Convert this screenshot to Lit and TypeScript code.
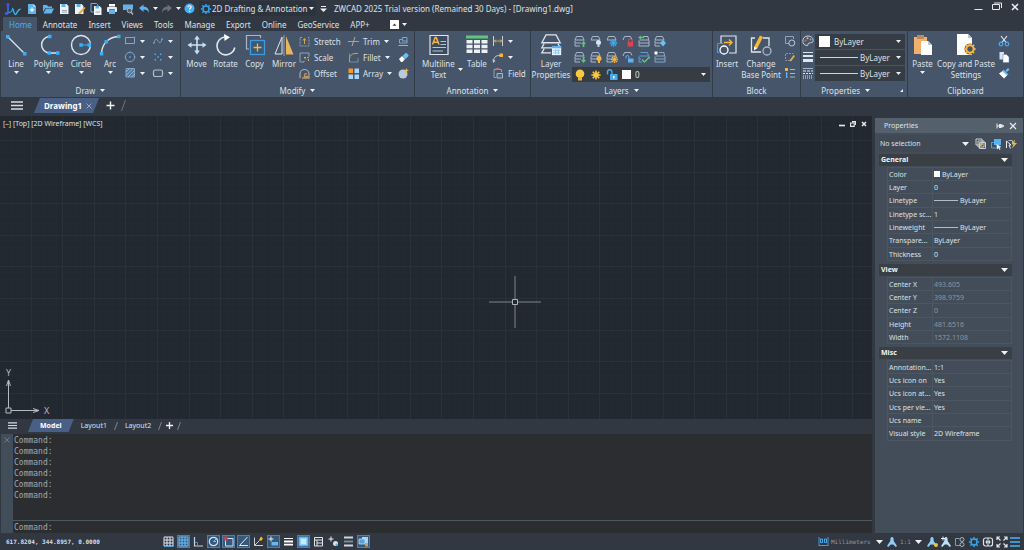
import { LitElement, html, svg, css, nothing, TemplateResult } from "lit";
import { customElement, state } from "lit/decorators.js";
import { classMap } from "lit/directives/class-map.js";

type Glyph = [number, number, unknown];

const W = "#dfe5ec";
const B = "#38b0f5";
const S = "#5fb4f0";
const Y = "#f5b83d";
const G = "#5fc878";
const M = "#a9b8c8";

const stack = (extra: unknown) => svg`
  <g fill="none" stroke=${M} stroke-width="1">
    <path d="M3.5 1.5h6l1.5 3.500h-9z"/><path d="M2 5.500v2.500h6M2 8.500v2.500h5M11 5.500v1"/>
  </g>${extra}`;

const gear = (cx: number, cy: number, r: number, color: string, hole = true) => svg`
  <g transform="translate(${cx} ${cy})" stroke=${color} fill="none">
    <circle r=${r} stroke-width=${hole ? 1.4 : 1} fill=${hole ? "none" : color}/>
    ${[0, 45, 90, 135, 180, 225, 270, 315].map(
      (a) => svg`<path d="M0 ${-r - 0.5}v-1.600" stroke-width="1.500" transform="rotate(${a})"/>`
    )}
  </g>`;

const compass = (color: string) => svg`
  <path d="M6 1c1.600 0 1.700 2 1.700 4L11 10 9.800 11 7.200 8.600H4.800L2.200 11 1 10l3.300-5C4.300 3 4.400 1 6 1z" fill=${color}/>`;

const ICONS: Record<string, Glyph> = {
  down: [5, 3, svg`<path d="M0 0h5L2.500 3z" fill="#eef2f6"/>`],
  downL: [7, 4, svg`<path d="M0 0h7L3.500 4z" fill="#eef2f6"/>`],
  corner: [3, 3, svg`<path d="M3 0v3H0z" fill="#eef2f6"/>`],
  logo: [18, 14, svg`
    <path d="M4 2.500v8.500" stroke="#3a6cf0" stroke-width="1.500"/><path d="M3.500 11c2.500 0 4-1.500 5-3.500" stroke="#3a9cf0" stroke-width="1.200" fill="none"/>
    <circle cx="4" cy="2.500" r="1.600" fill="#3b52ee"/><circle cx="2.500" cy="11.500" r="1.600" fill="#3b62ee"/>
    <path d="M8 6.500c2 0 1.500 6 3.200 6s1.800-5 5.300-5.500" stroke="#35b4f0" stroke-width="1.500" fill="none"/>`],
  new: [12, 12, svg`<path d="M2 1h5.500L10 3.500V11H2z" fill=${S}/><path d="M7.500 1v2.500H10" fill="#cfe9fb"/><path d="M6 4.500v4.500M3.800 6.800h4.400" stroke="#fff" stroke-width="1.200"/>`],
  open: [12, 12, svg`<path d="M1 2h4l1 1.500h4V5H3.500L1 9z" fill=${S}/><path d="M4 5.500h8L9.500 10.500H1.500z" fill=${S}/>`],
  save: [12, 12, svg`<path d="M2 1h6.500L10.500 3V11H2z" fill="#f0f3f6"/><path d="M3.500 1h4v3h-4z" fill=${S}/><path d="M4 7.500h5M4 9.200h5" stroke="#8496a8" stroke-width=".8"/>`],
  saveas: [12, 12, svg`<path d="M1 1h6.500L9.500 3V11H1z" fill="#f0f3f6"/><path d="M2.500 1h4v3h-4z" fill=${S}/><path d="M5 9.500 10.500 4l1 1L6.500 10.500l-2 .5z" fill=${Y} stroke="#8a6a20" stroke-width=".3"/>`],
  saveall: [12, 12, svg`<path d="M1 .5h5.500L8 2v7H1z" fill="none" stroke=${S}/><path d="M4 3h5.500L11.500 5v7H4z" fill="#f0f3f6"/><path d="M5.500 3h3.500v2.500H5.500z" fill=${S}/><path d="M5.500 9h4.500" stroke="#8496a8" stroke-width=".8"/>`],
  print: [12, 12, svg`<path d="M3 1h6v2.500H3z" fill="#fff"/><rect x="1" y="4" width="10" height="5" rx="1" fill="#e8edf2"/><path d="M3 7h6v4H3z" fill=${S}/><path d="M3 6.500h6" stroke="#6b7a8a"/>`],
  preview: [12, 12, svg`<path d="M1 1.500h10v5H1z" fill=${S}/><path d="M1 6.500h3" stroke=${S}/><circle cx="7.500" cy="7.500" r="2.300" fill="#56616e" stroke="#aab6c2"/><path d="m9 9 2 2.500" stroke="#aab6c2" stroke-width="1.400"/>`],
  undo: [12, 10, svg`<path d="M1 4 5.500 .5v2.300C9 2.800 11 4.500 11 9 10 6.300 8.500 5.600 5.500 5.600V8z" fill=${S}/>`],
  redo: [12, 10, svg`<path d="M11 4 6.500 .5v2.300C3 2.800 1 4.500 1 9c1-2.700 2.500-3.400 5.500-3.400V8z" fill="#66707c"/>`],
  help: [11, 11, svg`<circle cx="5.500" cy="5.500" r="5" fill="#49aef2"/><path d="M4 4.300c0-2.200 3.200-2 3.200-.2 0 1.200-1.600 1.200-1.600 2.500M5.600 7.700v1.100" fill="none" stroke="#fff" stroke-width="1.100"/>`],
  gear: [12, 12, gear(6, 6, 3, "#35a8f0")],
  qat: [7, 7, svg`<path d="M1 1.500h5" stroke="#eef2f6"/><path d="M0 3.500h7L3.500 7z" fill="#eef2f6"/>`],
  winmin: [9, 9, svg`<path d="M.5 7.500h8" stroke="#e8ecf0"/>`],
  winmax: [10, 9, svg`<path d="M.5 2.500h7v5h-7zM2 1h7.500v5" fill="none" stroke="#e8ecf0"/>`],
  winx: [8, 8, svg`<path d="m1 1 6 6M7 1 1 7" stroke="#eef2f6" stroke-width="1.500"/>`],
  ribmin: [9, 9, svg`<rect width="9" height="9" fill="#fff"/><path d="M2.500 5.800 4.500 3.500l2 2.300z" fill="#333a44"/>`],
  line: [22, 22, svg`<path d="m2.500 2.500 17 17" stroke=${W} stroke-width="1.200"/><path d="M1 1h3.500v3.500H1zM18 18h3.500v3.500H18z" fill=${B}/>`],
  poly: [22, 22, svg`<path d="M11 2.500a8.300 8.300 0 0 0 0 16.500h9" fill="none" stroke=${W} stroke-width="1.400"/><path d="M10 .8h3.500v3.500H10zM9.500 17.200H13v3.500H9.500zM18 17.200h3.500v3.500H18z" fill=${B}/>`],
  circle: [22, 22, svg`<circle cx="11" cy="11" r="9.500" fill="none" stroke=${W} stroke-width="1.400"/><path d="M11 11h8" stroke=${B}/><path d="M9.300 9.300h3.500v3.500H9.300zM17.500 9.300H21v3.500h-3.500z" fill=${B}/>`],
  arc: [22, 22, svg`<path d="M2.500 19.500C3 10 9 3 19.500 2.500" fill="none" stroke=${W} stroke-width="1.400"/><path d="M.8 18h3.500v3.500H.8zM5.500 6H9v3.500H5.500zM18 .8h3.500v3.500H18z" fill=${B}/>`],
  rect: [12, 12, svg`<path d="M1.500 2.500h9v6h-9z" fill="none" stroke="#8fa3b8"/><path d="M.8 7.800h1.500v1.500H.8zM9.800 1.800h1.500v1.500H9.800z" fill=${B}/>`],
  spline: [12, 12, svg`<path d="M2 8c1-4.500 2.800-4.500 4-2s3 2.500 4-2" fill="none" stroke="#8fa3b8"/><path d="M1 7.300h1.500v1.500H1zM9.500 3.300H11v1.500H9.500z" fill=${B}/>`],
  ellipse: [12, 12, svg`<circle cx="6" cy="6" r="4.700" fill="none" stroke="#8fa3b8"/><path d="M5.200 5.200h1.600v1.600H5.200zM9.800 5.200h1.600v1.600H9.800zM5.200.6h1.600v1.600H5.200z" fill=${B}/>`],
  points: [12, 12, svg`<path d="M2.500 2.500H4V4H2.500zM8 2.500h1.500V4H8zM5.200 5.200h1.600v1.600H5.200zM2.500 8H4v1.500H2.500zM8 8h1.500v1.500H8z" fill=${B}/>`],
  hatch: [12, 12, svg`<path d="M2 1.500h8.500V10H2z" fill="#56779b" stroke="#7fa3c6"/><path d="m2 5 3.500-3.500M2 8.500l7-7M4 10l6.500-6.500M7.500 10l3-3" stroke="#9cc6ec" stroke-width=".8"/>`],
  cloud: [12, 12, svg`<rect x="1.500" y="3" width="9" height="6.500" rx="1.800" fill="none" stroke="#b3c0ce" stroke-width="1.200"/>`],
  move: [22, 22, svg`<path d="M11 4v14M4 11h14" stroke="#c8e2f5" stroke-width="1.600"/><path d="m11 1.500 2.800 4H8.200zM11 20.500l2.800-4H8.200zM1.500 11l4-2.800v5.600zM20.500 11l-4-2.800v5.600z" fill="#c8e2f5"/>`],
  rotate: [22, 22, svg`<path d="M9.500 3A9 9 0 1 0 19.800 13.500" fill="none" stroke=${W} stroke-width="1.600"/><path d="M9 0l6 3.300L9.500 7z" fill="#fff"/>`],
  copy: [22, 22, svg`<path d="M5 15H2.500V1.500h14V4" fill="none" stroke=${M} stroke-width="1.200"/><rect x="6.500" y="6.500" width="14" height="14" fill="#3d5875" stroke="#3f9adf" stroke-width="1.300"/><path d="M13.500 9.500v8M9.500 13.500h8" stroke=${Y} stroke-width="1.300"/>`],
  mirror: [22, 22, svg`<path d="M9 3v17H2z" fill="none" stroke=${W}/><path d="M13 2v18.500h7.500z" fill="#e8b65a"/><path d="M11 1v21" stroke=${M} stroke-width=".8"/>`],
  stretch: [11, 11, svg`<path d="M3 1.500H1v8.500h9V1.500H8" fill="none" stroke="#8fa3b8" stroke-dasharray="2 1"/><path d="M5.500 8V3M4 4.500 5.500 2.500 7 4.500" stroke="#d6a84c" fill="none"/>`],
  scale: [11, 11, svg`<path d="M5 10H1V1h9v3.500" fill="none" stroke="#8fa3b8"/><path d="M5 5.500h4.500V10M7 7.500 5 5.500M5 10v-1" fill="none" stroke="#d6b064" stroke-dasharray="2 1"/>`],
  offset: [11, 11, svg`<path d="M1 10V6a4.500 4.500 0 0 1 9 0v1.500" fill="none" stroke="#b8ada6" stroke-width="1.200"/><path d="M3 10h7V8.500H5.500V7a1.500 1.500 0 0 1 2.500-1" fill="none" stroke="#b8956a" stroke-width="1.300"/>`],
  trim: [11, 11, svg`<path d="M0 5.500h5" stroke="#c7a05a"/><path d="M6 5.500h5" stroke="#8fa3b8"/><path d="M7 1 4 10" stroke="#b8a98a"/>`],
  fillet: [11, 11, svg`<path d="M1.500 10V7C1.500 3.500 4 1.500 7 1.500h3" fill="none" stroke="#c7a05a"/><path d="M1.500 1.500v8.500h8.500V6" fill="none" stroke="#8fa3b8" stroke-width=".7"/>`],
  array: [11, 11, svg`<path d="M.5.500h4.500V5H.500z" fill="#f59a23"/><path d="M6.500.5H11V5H6.500zM.5 6.500H5V11H.5zM6.500 6.500H11V11H6.500z" fill="#a8d4f7"/>`],
  align: [11, 11, svg`<path d="M1.500 3.500h3V1.500H9V7H1.500zM4.500 3.500V5H9" fill="none" stroke="#7fa6c8"/><path d="M.5 9.500h9.500" stroke="#8fb4d6"/>`],
  erase: [11, 11, svg`<path d="m1 7 3-3 3 3-2.500 3H3z" fill="#fff"/><path d="m4.500 4 3-3h1L10.500 3v1L7.500 7z" fill="#6cc0f5"/>`],
  explode: [11, 11, svg`<circle cx="5" cy="6" r="4.500" fill="#b9cadb"/><path d="m8.500 0 .7 1.800 1.800.7-1.800.8-.7 1.700-.8-1.700L6 2.500l1.700-.7z" fill=${Y}/>`],
  mtext: [22, 22, svg`<path d="M2 1.500h18v19H2z" fill="#3b4a5e" stroke=${W} stroke-width="1.200"/><path d="m4.500 10.500 2.700-7h1l2.800 7M5.600 8.200H10" stroke=${Y} fill="none" stroke-width="1.500"/><path d="M12.500 7.500H18M12.500 10.500H18M4.500 13.500H18M4.500 17H15" stroke="#a8c8e4" stroke-width="1.200"/>`],
  table: [22, 22, svg`<path d="M0 1.500h22v3H0z" fill=${G}/><path d="M.5 6h6v3.500h-6zM8 6h6v3.500H8zM15.500 6h6v3.500h-6zM.5 10.800h6v3.500h-6zM8 10.800h6v3.500H8zM15.500 10.800h6v3.500h-6zM.5 15.600h6v3.500h-6zM8 15.600h6v3.500H8zM15.500 15.600h6v3.500h-6z" fill="#eef1f4"/>`],
  dim: [12, 12, svg`<path d="M1.500 1v10M10.500 1v10" stroke="#c5cdd6"/><path d="M2 6h8M4 4.500 2.500 6 4 7.500M8 4.500 9.500 6 8 7.500" stroke=${Y} fill="none" stroke-width=".8"/>`],
  leader: [12, 12, svg`<path d="M1.500 10.500C2 6 3.500 4.500 8 4.500" fill="none" stroke="#c5cdd6"/><path d="M7.500 2.500h3.500V6H7.500z" fill=${Y}/><path d="m.500 8 .5 4 2.500-2z" fill="#c5cdd6"/>`],
  field: [12, 12, svg`<path d="M4 10.500H2v-8h7.500V5" fill="none" stroke="#9b9fab"/><path d="M3.500 1h4v2h-4z" fill="#c0707a"/><path d="M5 6.500h5.500v4.500H5z" fill="#52637a" stroke=${M}/>`],
  layerprops: [22, 22, svg`<g transform="scale(.92)"><g fill="none" stroke=${W} stroke-width="1.400"><path d="M6.500 1h11l4.500 8.500H2z"/><path d="M4.500 10.500 2 15h20l-2.500-4.500M4.500 16 2 20.500h10"/></g><path d="M13 13h10v10H13z" fill="#eef5fb"/><path d="M13 13h10v2.500H13z" fill=${S}/><path d="M14 18h8M14 20.500h8M17 16v6M20 16v6" stroke="#7cc0f0" stroke-width=".8"/></g>`],
  l0: [13, 12, stack(svg`<path d="M8 9h1.600v3h1.800V9H13l-2.500-3z" fill=${G}/>`)],
  l1: [13, 12, svg`<path d="M3.500 1.500h6l1.500 3.500h-9z" fill="none" stroke=${M}/><circle cx="9.500" cy="7.500" r="2.500" fill="#d5e5f5"/><path d="M8.500 10h2v2h-2z" fill="#c3d3e3"/>`],
  l2: [13, 12, svg`<path d="M3.500 1.500h6l1.500 3.500h-9z" fill="none" stroke=${M}/>${gear(8.5, 8, 1.6, B, false)}`],
  l3: [13, 12, svg`<path d="M2 5 3.500 1.500h6l1.500 3" fill="none" stroke=${M}/><path d="M7.500 7V5.500a1.800 1.800 0 0 1 3.600 0V7" fill="none" stroke="#d05560"/><path d="M6.500 7H12v4.500H6.500z" fill="#e0414d"/>`],
  l4: [13, 12, svg`<g fill="none" stroke=${M}><path d="M6 1.500h5l.5 3.500h-9M2 5.500v2.500h10V5M2 8.500v2.500h10V8"/></g><path d="M1 2.500 4 .5v1.300h3v1.500H4v1.200z" fill=${G}/>`],
  l5: [13, 12, stack(svg`<path d="m7 8 3-3 3 3-3 3.500z" fill="#6cc0f5"/>`)],
  l6: [13, 12, stack(svg`<path d="M8 9h1.600V6h1.800v3H13l-2.500 3z" fill=${G}/>`)],
  l7: [13, 12, stack(svg`<circle cx="10" cy="7.500" r="2.500" fill=${Y}/><path d="M9 10h2v2H9z" fill=${Y}/>`)],
  l8: [13, 12, stack(gear(9.5, 8.5, 1.5, Y, false))],
  l9: [13, 12, svg`<path d="M2 5 3.500 1.500h6l1.500 3" fill="none" stroke=${M}/><path d="M5 7.500V6a1.500 1.500 0 0 1 3 0v1" fill="none" stroke=${S}/><path d="M7 7.500h5.500v4H7z" fill=${S}/>`],
  l10: [13, 12, svg`<g fill="none" stroke="#5f9fce"><path d="M3.500 1.500h7l1 3.500h-9M2 5.500v2.500h2M2 8.500V11h3M12 5v3"/></g><path d="m5 8.500 2.500 2.500L12.500 6" fill="none" stroke=${G} stroke-width="1.300"/>`],
  l11: [13, 12, svg`<g fill="none" stroke="#8aa9c6"><path d="M6 1.500h5l.5 3.500h-9M2 5.500v2.500h10V5M2 8.500v2.500h10V8"/></g><path d="M1.500.500h3v3h-3z" fill="#fff"/>`],
  bulb: [12, 12, svg`<circle cx="6" cy="4.800" r="4.300" fill="#fcc93e"/><path d="M4 8.500h4v3H4z" fill="#f0b52a"/>`],
  sun: [12, 12, gear(6, 6, 2.5, "#fcc93e", false)],
  unlock: [12, 12, svg`<path d="M1.500 5.500V3a2.200 2.200 0 0 1 4.400 0v2" fill="none" stroke="#48a8f0" stroke-width="1.400"/><path d="M4 5h7.500v6H4z" fill="#48a8f0"/><path d="M7 7h1.500v2.500H7z" fill="#fff"/>`],
  insert: [22, 22, svg`<path d="M5 9V2h15v17h-7" fill="none" stroke=${W} stroke-width="1.200"/><path d="M1.500 9.500h6M1.500 9.500v9h2" fill="none" stroke="#3f9adf" stroke-width="1.200"/><circle cx="8" cy="16" r="4" fill="#46556a" stroke="#fff" stroke-width="1.300"/><path d="M8 8.500h8M13 5.500l3 3-3 3" fill="none" stroke=${Y} stroke-width="1.400"/>`],
  base: [22, 22, svg`<path d="M5 4H1.500v14H11M13 4h6v8" fill="none" stroke=${W} stroke-width="1.300"/><circle cx="17" cy="17" r="4" fill="none" stroke=${M} stroke-width="1.300"/><path d="M4 13 10 1.500l3 1.500-5.500 11L4 16z" fill=${Y}/><path d="M4 13v3.500L7.500 14z" fill="#fff"/>`],
  blk0: [12, 12, svg`<path d="M5 8.500H1.500v-7h8V4" fill="none" stroke="#8fa3b8"/><circle cx="7.800" cy="8" r="3" fill="none" stroke="#b9c6d4"/>`],
  blk1: [12, 12, svg`<path d="M6 9.500H1.500v-7h8" fill="none" stroke="#8493a5" stroke-dasharray="2 1"/><path d="m5.500 9.500 4-5.500 1.500 1-4 5.500z" fill="#e0ae4a"/>`],
  blk2: [12, 12, svg`<path d="M1 1h3v3H1z" fill=${Y}/><path d="M2.500 5v6M2.500 7H4M2.500 10H4" stroke=${S}/><path d="M6 2.500h5M6 6.500h5M6 10h5" stroke="#a9b8c8"/>`],
  palette: [12, 12, svg`<path d="M6 1C2.500 1 .8 3.500.8 6S2.500 10.500 5 10.500c2 0 0-2 2-2.500s4.200 0 4.200-2.500S9 1 6 1z" fill="none" stroke="#c3cedb"/><circle cx="3.500" cy="5.500" r="1" fill="#e06070"/><circle cx="5.500" cy="3.300" r="1" fill=${Y}/><circle cx="8.500" cy="4.500" r="1" fill=${S}/>`],
  lw: [12, 12, svg`<path d="M1 1.500h10" stroke=${W}/><path d="M1 5h10" stroke=${W} stroke-width="2"/><path d="M1 9.500h10" stroke=${W} stroke-width="3"/>`],
  lt: [12, 12, svg`<path d="M1 1.500h10" stroke=${M}/><path d="M1 4h10" stroke=${W} stroke-dasharray="3 1"/><path d="M1 6.500h10" stroke=${W} stroke-dasharray="2 1"/><path d="M1 9h10M1 11h10" stroke=${W} stroke-dasharray="1 1"/>`],
  paste: [22, 22, svg`<path d="M2 3h13v17H2z" fill="#f2b070"/><path d="M5 1h7v4H5z" fill="#c48850"/><path d="M9 7h7l4 4v10H9z" fill="#fff"/><path d="M16 7v4h4" fill="#b9c6d4"/>`],
  cps: [22, 22, svg`<path d="M2 0h11l4 4v17H2z" fill="#fff"/><path d="M13 0v4h4" fill="#b9c6d4"/><circle cx="15" cy="15" r="5.500" fill="#46556a"/>${gear(15, 15, 3.7, Y)}<circle cx="15" cy="15" r="3.700" fill="none" stroke=${Y} stroke-width="2"/>`],
  cut: [12, 12, svg`<path d="M3 1l5.500 7M9 1 3.500 8" stroke="#e8edf2" stroke-width="1.100"/><circle cx="3" cy="9" r="1.800" fill="none" stroke="#4aa8ee" stroke-width="1.200"/><circle cx="9" cy="9" r="1.800" fill="none" stroke="#4aa8ee" stroke-width="1.200"/>`],
  copyS: [12, 12, svg`<path d="M1.500 1H6v7.500H1.500z" fill="#cfe4f5"/><path d="M5 3.500h3.500L11 6v5.500H5z" fill="#fff" stroke="#6b8096" stroke-width=".5"/>`],
  brush: [12, 12, svg`<path d="m7.500 3.500 2.500-2.500 1.500 1.500L9 5z" fill="#6cc0f5"/><path d="m5.500 2.500 5 5-1.500 1-4.500-4.500z" fill="#6cc0f5"/><path d="m4.500 4 4.500 4.500-3 3L1 6.500z" fill="#fff"/>`],
  menu: [12, 9, svg`<path d="M0 1h12M0 4.500h12M0 8h12" stroke="#d5dbe2" stroke-width="1.300"/>`],
  menuS: [9, 7, svg`<path d="M0 .800h9M0 3.500h9M0 6.200h9" stroke="#d5dbe2" stroke-width="1.200"/>`],
  close: [6, 6, svg`<path d="m.5.500 5 5M5.500.5l-5 5" stroke="#9aa8ba"/>`],
  closeD: [6, 6, svg`<path d="m.5.500 5 5M5.500.5l-5 5" stroke="#6f7a86"/>`],
  closeW: [8, 8, svg`<path d="m1 1 6 6M7 1 1 7" stroke="#e6ebf0" stroke-width="1.200"/>`],
  plus: [9, 9, svg`<path d="M4.500.500v8M.5 4.500h8" stroke="#eef2f6" stroke-width="1.400"/>`],
  plusS: [7, 7, svg`<path d="M3.500 0v7M0 3.500h7" stroke="#eef2f6" stroke-width="1.300"/>`],
  slash: [5, 11, svg`<path d="M4.500 0 .5 11" stroke="#6b7581"/>`],
  slashS: [4, 8, svg`<path d="M3.500 0 .5 8" stroke="#7b8591"/>`],
  vmin: [6, 6, svg`<path d="M0 4.500h6" stroke="#e8ecf0" stroke-width="1.600"/>`],
  vmax: [6, 6, svg`<path d="M.6 2h3.600v3.400H.6zM2 .6h3.600V4" fill="none" stroke="#e8ecf0" stroke-width="1.100"/>`],
  vx: [6, 6, svg`<path d="m1 1 4 4M5 1 1 5" stroke="#e8ecf0" stroke-width="1.500"/>`],
  pin: [8, 6, svg`<path d="M1 .5v5M1 3h2" stroke="#e6ebf0"/><path d="M3 1h2.500v4H3z" fill="#e6ebf0"/><path d="M5 3h3M6 1.500v3" stroke="#e6ebf0" stroke-width="1.300"/>`],
  pa: [12, 12, svg`<g fill="none" stroke="#c9d1da"><path d="M1 1h6v6H1zM4.500 4.500h6v6h-6z"/><path d="M3 3h6v6H3z"/></g><path d="M6 4v4M4 6h4" stroke=${Y}/>`],
  pb: [12, 12, svg`<path d="M4 1h7v6H4z" fill="#58b2f2"/><path d="M4 4.500H1.500V10H8" fill="none" stroke="#58a0dc"/><path d="m6.500 6 5 3-2 .5 1 2-1 .5-1-2-1.500 1.500z" fill="#eef2f6"/>`],
  pc: [12, 12, svg`<path d="M1.500 3v7M1.500 3l4.500 4H4l1.500 3.500" fill="none" stroke="#e6ebf0"/><path d="M3.500 2.500h4v4" fill="none" stroke="#aab4bf"/><path d="M10 1.500 6.500 6H8.500L7 10.500 12 5H9.500z" fill=${Y}/>`],
  s0: [11, 11, svg`<path d="M1 1h9v9H1zM4 1v9M7 1v9M1 4h9M1 7h9" fill="none" stroke="#dfe5ec"/><path d="M10.500 2v8.500H2" fill="none" stroke="#4aa0e0"/>`],
  s1: [11, 11, svg`<path d="M1 1h9v9H1zM4 1v9M7 1v9M1 4h9M1 7h9" fill="none" stroke="#6fc0f8"/>`],
  s2: [11, 11, svg`<path d="M1.500 1v9H10" fill="none" stroke="#c9d1da" stroke-width="1.200"/><path d="M2 6.500h2.500V10" fill="none" stroke="#3f8fd0"/>`],
  s3: [11, 11, svg`<circle cx="5.500" cy="5.500" r="4.200" fill="none" stroke="#d5dfe9" stroke-width="1.200"/><path d="M5.500 5.500 8 3M5.500 5.500H8" stroke="#6fc0f8"/>`],
  s4: [11, 11, svg`<path d="M2.500 2.500H10V10H2.500z" fill="none" stroke="#d5dfe9"/><path d="M.5.500h4v4h-4z" fill="#b04a50"/>`],
  s5: [11, 11, svg`<path d="M9.500 1 1.500 9.500H10" fill="none" stroke="#dfe7ef"/>`],
  s6: [11, 11, svg`<path d="M1.500 1.500V9.500H10M1.500 9.500l5-5" fill="none" stroke="#c9d1da"/><path d="m6 4 2-3.500 2 2L8 5z" fill=${Y}/>`],
  s7: [11, 11, svg`<path d="M3 .5v5M.5 3h5" stroke="#e8eef4"/><path d="M3.500 6H10v3.500H3.500z" fill="#6fb5ea"/>`],
  s8: [11, 11, svg`<path d="M1 2.500h9" stroke="#fff"/><path d="M1 5.500h9M1 8.700h9" stroke="#fff" stroke-width="1.800"/>`],
  s9: [11, 11, svg`<path d="M1 1h9v9H1z" fill="#8fd0ff" stroke="#4f98d2"/><path d="M3 3h5v5H3z" fill="#cdeaff"/>`],
  s10: [11, 11, svg`<path d="M1.500 1.500h8v8.500h-8zM1.500 4h8M4 4v6M4 7h5" fill="none" stroke="#dfe5ec"/>`],
  s11: [11, 11, svg`<path d="M3 .5v5M.5 3h5" stroke="#e8eef4"/><circle cx="7.500" cy="7.500" r="2.500" fill="#cfe4f5"/><circle cx="8.500" cy="8.500" r="1" fill=${B}/>`],
  s12: [11, 11, svg`<path d="M1 1.500h9M1 9.500h9" stroke="#cfd6dd" stroke-width="1.800"/><path d="M1 5.500h9" stroke="#7d8894" stroke-width="2"/>`],
  s13: [11, 11, svg`<path d="M4 1h6v7H4z" fill="#a8d4f7"/><path d="M1 3h6v5H1z" fill="#5c9fd6" stroke="#cfe4f5" stroke-width=".7"/><path d="M7 7h3v3.500H7z" fill="#c7a05a"/>`],
  mm: [11, 11, svg`<path d="M1 10V1M10 1v9M1 9.500h9" fill="none" stroke="#3f9adf"/><path d="M2.500 3h2v3.500h-2zM6.500 3h2v3.500h-2z" fill="none" stroke="#4aa8ee"/>`],
  ann: [12, 12, compass("#8fcdf8")],
  ann2: [12, 12, svg`${compass("#8fcdf8")}<circle cx="10" cy="9" r="2" fill=${Y}/>`],
  ann3: [12, 12, svg`${compass("#bfe0f8")}<path d="M1 2.500h4M3 .5v4" stroke="#e8eef4"/>`],
  iso: [12, 12, svg`<path d="M6 9.500H1.500v-7h4" fill="none" stroke="#8d97a2"/><circle cx="8" cy="3.500" r="2" fill="none" stroke="#aab4bf"/><circle cx="8" cy="8.500" r="2" fill="none" stroke="#aab4bf"/>`],
  globe: [12, 12, svg`<rect x="1.500" y="2" width="9" height="8" rx="2" fill="none" stroke="#e0e5ea" stroke-width="1.200"/><path d="M6 2v8M3.500 6h5M4.500 4.500v3M7.500 4.500v3" stroke="#e0e5ea"/>`],
  full: [12, 12, svg`<path d="M1 4V1h3M8 1h3v3M11 8v3H8M4 11H1V8M1 1l3.500 3.500M11 1 7.500 4.500M11 11 7.500 7.500M1 11l3.500-3.500" fill="none" stroke="#e0e5ea" stroke-width="1.200"/>`],
  menuB: [10, 10, svg`<path d="M0 1h10M0 5h10M0 9h10" stroke="#4cb2f5" stroke-width="1.500"/>`],
};

const icon = (name: string) => {
  const [w, h, body] = ICONS[name];
  return html`<svg class="ic" width=${w} height=${h} viewBox="0 0 ${w} ${h}" aria-hidden="true">${body}</svg>`;
};

interface PropRow {
  label: string;
  value: string;
  swatch?: boolean;
  line?: boolean;
}

const SECTIONS: { title: string; dim?: boolean; rows: PropRow[] }[] = [
  {
    title: "General",
    rows: [
      { label: "Color", value: "ByLayer", swatch: true },
      { label: "Layer", value: "0" },
      { label: "Linetype", value: "ByLayer", line: true },
      { label: "Linetype sc...", value: "1" },
      { label: "Lineweight", value: "ByLayer", line: true },
      { label: "Transpare...", value: "ByLayer" },
      { label: "Thickness", value: "0" },
    ],
  },
  {
    title: "View",
    dim: true,
    rows: [
      { label: "Center X", value: "493.605" },
      { label: "Center Y", value: "398.9759" },
      { label: "Center Z", value: "0" },
      { label: "Height", value: "481.6516" },
      { label: "Width", value: "1572.1108" },
    ],
  },
  {
    title: "Misc",
    rows: [
      { label: "Annotation...", value: "1:1" },
      { label: "Ucs icon on", value: "Yes" },
      { label: "Ucs icon at...", value: "Yes" },
      { label: "Ucs per vie...", value: "Yes" },
      { label: "Ucs name", value: "" },
      { label: "Visual style", value: "2D Wireframe" },
    ],
  },
];

@customElement("cad-properties")
export class CadProperties extends LitElement {
  static styles = css`
    :host { display: block; background: #434d59; color: #dde2e7; font-size: 7px; line-height: 10px; }
    button, select { font: inherit; color: inherit; background: none; border: 0; margin: 0; padding: 0; appearance: none; display: flex; align-items: center; }
    .ic { display: block; flex: none; }
    .head { display: flex; align-items: center; gap: 5px; height: 15px; padding: 0 6px 0 9px; background: #55606d; }
    .head h2 { flex: 1; margin: 0; font-size: inherit; font-weight: 400; }
    .pick { display: flex; align-items: center; gap: 3px; padding: 2px 6px 2px 4px; }
    .box { flex: 1; display: flex; align-items: center; height: 17px; padding-right: 2px; background: #414954; margin-right: 1px; }
    .box select { flex: 1; padding-left: 1px; outline: 0; }
    section { padding: 0 11px 0 4px; margin-bottom: 3px; }
    .bar { display: flex; align-items: center; justify-content: space-between; width: 100%; height: 12px; margin-bottom: 1px; padding: 0 4px 0 2px; background: #3a3f46; font-weight: 700; color: #f1f3f5; }
    table { width: calc(100% - 8px); margin-left: 8px; border-collapse: collapse; table-layout: fixed; }
    tr { height: 13px; }
    tr:nth-child(3n) { height: 14px; }
    th, td { padding: 0 0 0 1px; border: 1px solid #4c5661; font-weight: 400; text-align: left; white-space: nowrap; line-height: 11px; }
    th { width: 43px; padding-top: 1px; line-height: 10px; }
    .dim td { color: #8c959f; }
    .val { display: flex; align-items: center; gap: 2px; }
    .sw { width: 6px; height: 6px; background: #fff; }
    .ln { width: 24px; height: 1px; background: #b4bbc3; }
  `;

  render() {
    return html`
      <div class="head"><h2>Properties</h2>
        <button aria-label="Auto-hide">${icon("pin")}</button>
        <button aria-label="Close">${icon("closeW")}</button>
      </div>
      <div class="pick">
        <div class="box"><select aria-label="Selection"><option>No selection</option></select>${icon("downL")}</div>
        <button aria-label="Toggle pick add">${icon("pa")}</button>
        <button aria-label="Select objects">${icon("pb")}</button>
        <button aria-label="Quick select">${icon("pc")}</button>
      </div>
      ${SECTIONS.map(
        (s) => html`<section>
          <button class="bar">${s.title}${icon("downL")}</button>
          <table class=${classMap({ dim: !!s.dim })}>
            ${s.rows.map(
              (r) => html`<tr>
                <th scope="row">${r.label}</th>
                <td><div class="val">
                  ${r.swatch ? html`<span class="sw"></span>` : nothing}${r.line ? html`<span class="ln"></span>` : nothing}${r.value}
                </div></td>
              </tr>`
            )}
          </table>
        </section>`
      )}
    `;
  }
}

const TABS = ["Home", "Annotate", "Insert", "Views", "Tools", "Manage", "Export", "Online", "GeoService", "APP+"];
const STATUS: [string, string, boolean][] = [
  ["s0", "Grid", false], ["s1", "Snap", true], ["s2", "Ortho", false], ["s3", "Polar", true], ["s4", "Object snap", true],
  ["s5", "Object tracking", true], ["s6", "Dynamic UCS", false], ["s7", "Dynamic input", true], ["s8", "Lineweight", false],
  ["s9", "Transparency", true], ["s10", "Quick properties", false], ["s11", "Cycling", false], ["s12", "Layers", false], ["s13", "Model", true],
];

@customElement("app-root")
export class AppRoot extends LitElement {
  static styles = css`
    :host { display: flex; flex-direction: column; min-height: 100vh; box-sizing: border-box; background: #323842; color: #dde2e7; font: 8px/11px "Noto Sans", "Open Sans", sans-serif; overflow: hidden; }
    * { box-sizing: border-box; }
    button, select, input { font: inherit; color: inherit; background: none; border: 0; border-radius: 0; margin: 0; padding: 0; appearance: none; outline: 0; }
    button { display: flex; align-items: center; white-space: nowrap; }
    option { color: #222; }
    .ic { display: block; flex: none; }
    .title { display: flex; align-items: center; height: 17px; padding: 0 5px 0 4px; }
    .qat { display: flex; align-items: center; gap: 4px; margin-left: 4px; }
    .undo { display: flex; align-items: center; gap: 3px; }
    .work { display: flex; align-items: center; height: 15px; margin: 0 4px; padding: 0 2px 0 1px; background: #2d333c; }
    .work select { width: 97px; }
    .title h1 { flex: 1; margin: 0 0 0 7px; font-size: 8px; font-weight: 400; }
    .win { display: flex; gap: 9px; align-self: flex-start; padding-top: 2px; }
    .tabs { display: flex; align-items: center; height: 14px; padding-left: 3px; }
    .tabs button { height: 14px; padding: 0 5px 0 6px; }
    .tabs .on { background: #46556a; color: #45b0f0; }
    .tabs .mini { gap: 3px; margin-left: 9px; }
    .ribbon { display: flex; gap: 1px; padding: 0 1px; background: #323b48; }
    .panel { display: flex; flex-direction: column; background: #46556a; padding: 2px 0 1px; flex: none; }
    .draw { width: 179px; } .modify { width: 233px; } .annotation { width: 115px; } .block { width: 87px; } .properties { width: 106px; } .clipboard { width: 115px; }
    .layers { flex: 1; }
    .modify .body { padding-left: 1px; }
    .body { display: flex; height: 51px; }
    .cap { display: flex; align-items: center; justify-content: center; gap: 5px; height: 12px; }
    .properties .cap { justify-content: flex-end; padding-right: 4px; }
    .properties .cap .ic:last-child { margin-left: 25px; }
    .big { flex-direction: column; justify-content: flex-start; gap: 2px; padding-top: 1px; line-height: 11px; text-align: center; flex: none; }
    .w28 { width: 28px; } .w29 { width: 29px; } .w30 { width: 30px; } .w35 { width: 35px; } .w40 { width: 40px; } .w58 { width: 58px; }
    .lab { display: flex; align-items: center; gap: 3px; }
    .mt { margin-left: 7px; align-items: flex-start; width: 40px; }
    .mt > .ic { margin-left: 6px; }
    .col { display: grid; grid-auto-rows: 16px; align-items: center; align-content: start; }
    .col button { gap: 4px; height: 16px; }
    .off { margin-left: 3px; }
    .tools { display: flex; flex-direction: column; flex: 1; padding: 0 2px 0 1px; }
    .lgrid { display: grid; grid-template-columns: repeat(6, 13px); grid-auto-rows: 16px; gap: 0 3px; align-items: center; padding-left: 1px; }
    .combo { display: flex; align-items: center; gap: 2px; height: 15px; padding: 0 4px 0 2px; background: #363c44; }
    .combo select { flex: 1; min-width: 0; }
    .lcombo { gap: 4px; margin-top: 2px; }
    .sq { width: 9px; height: 9px; background: #fff; }
    .sq.l { width: 11px; height: 11px; margin: 0 2px; }
    .rule { flex: 1; height: 1px; background: #cfd5db; margin-left: 3px; }
    .combo.r select { flex: none; width: 34px; }
    .docs { display: flex; align-items: center; height: 19px; padding: 0 0 2px 11px; }
    .doc { display: flex; align-items: center; gap: 4px; height: 15px; margin: 0 7px 0 11px; padding: 0 7px 0 10px; clip-path: polygon(6px 0, 100% 0, calc(100% - 6px) 100%, 0 100%); background: #4a5f86; font-weight: 700; color: #fff; }
    .sl { margin-left: 6px; }
    .main { display: flex; flex: 1; min-height: 0; }
    .left { display: flex; flex-direction: column; flex: 1; min-width: 0; margin-right: 3px; }
    cad-properties { width: 148px; margin: 2px 1px 0 0; }
    .view { position: relative; flex: 1; min-height: 200px; background: #212830; overflow: hidden; }
    .grid { position: absolute; inset: 0; width: 100%; height: 100%; }
    .vlabel { position: absolute; left: 3px; top: 2px; font-size: 7px; }
    .vwin { position: absolute; right: 5px; top: 5px; display: flex; gap: 5px; }
    .cross { position: absolute; left: 489px; top: 160px; }
    .ucs { position: absolute; left: 0; bottom: 0; }
    .ucs text { fill: #b5bbc2; font-size: 9px; }
    .lays { display: flex; align-items: center; height: 15px; padding: 0 0 2px 8px; gap: 7px; font-size: 7px; }
    .lays .model { height: 13px; margin: 0 0 0 4px; padding: 0 12px; background: #4a5f86; clip-path: polygon(5px 0, 100% 0, calc(100% - 5px) 100%, 0 100%); font-weight: 700; color: #fff; }
    .lays .tail { display: flex; align-items: center; gap: 4px; }
    .cmd { display: flex; height: 99px; background: #2b2d31; margin-left: 1px; font: 8px/11px "DejaVu Sans Mono", monospace; color: #a3a8ae; }
    .grip { width: 12px; background: #414d59; padding: 3px 3px 0; align-items: flex-start; }
    .log { flex: 1; display: flex; flex-direction: column; }
    .hist { flex: 1; padding: 1px 0 0 1px; border-bottom: 1px solid #4c585e; }
    .entry { display: flex; height: 12px; padding-left: 1px; align-items: center; }
    .entry input { flex: 1; min-width: 0; }
    .status { display: flex; align-items: center; height: 17px; padding: 0 4px 0 6px; font: 6px/10px "DejaVu Sans Mono", monospace; }
    .coord { width: 156px; font-weight: 700; color: #d8dde2; }
    .snaps { display: flex; gap: 2px; flex: 1; }
    .snaps button { width: 13px; height: 13px; justify-content: center; }
    .snaps .on { background: #35597c; outline: 1px solid #4682b4; outline-offset: -1px; }
    .right { display: flex; align-items: center; gap: 2px; color: #8e979f; }
    .unit { width: 43px; } .ratio { width: 13px; }
    .extras { display: flex; gap: 2px; margin-left: 2px; align-items: center; }
    .sep { margin-left: 1px; }
  `;

  @state() private tab = "Home";

  private big(name: string, label: unknown, width: string, arrow = false) {
    return html`<button class="big ${width}">${icon(name)}<span>${label}</span>${arrow ? icon("down") : nothing}</button>`;
  }

  private small(name: string, label = "", arrow = false) {
    return html`<button aria-label=${label || name}>${icon(name)}${label ? html`<span>${label}</span>` : nothing}${arrow ? icon("down") : nothing}</button>`;
  }

  private panel(title: string, body: TemplateResult, arrow = true, corner = false) {
    return html`<div class="panel ${title.toLowerCase()}">
      <div class="body">${body}</div>
      <div class="cap"><span>${title}</span>${arrow ? icon("down") : nothing}${corner ? icon("corner") : nothing}</div>
    </div>`;
  }

  private gridLines() {
    const major = [0, 32, 63, 95, 126];
    const minor = Array.from({ length: 25 }, (_, i) => Math.round((i * 158) / 25));
    return html`<svg class="grid" aria-hidden="true">
      <defs><pattern id="g" x="-1" y="24" width="158" height="158" patternUnits="userSpaceOnUse">
        ${minor.map((p) => svg`<path d="M${p + 0.5} 0V158M0 ${p + 0.5}H158" stroke="#232a33"/>`)}
        ${major.map((p) => svg`<path d="M${p + 0.5} 0V158M0 ${p + 0.5}H158" stroke="#29313a"/>`)}
      </pattern></defs>
      <rect width="100%" height="100%" fill="url(#g)"/>
    </svg>`;
  }

  render() {
    return html`
      <header class="title">
        ${icon("logo")}
        <div class="qat">
          ${["new", "open", "save", "saveas", "saveall", "print", "preview"].map((n) => html`<button aria-label=${n}>${icon(n)}</button>`)}
          <div class="undo">
            <button aria-label="Undo">${icon("undo")}</button>${icon("down")}
            <button aria-label="Redo">${icon("redo")}</button>${icon("down")}
            <button aria-label="Help">${icon("help")}</button>
          </div>
        </div>
        <div class="work">${icon("gear")}<select aria-label="Workspace"><option>2D Drafting &amp; Annotation</option></select>${icon("down")}</div>
        <button aria-label="Customize">${icon("qat")}</button>
        <h1>ZWCAD 2025 Trial version (Remained 30 Days) - [Drawing1.dwg]</h1>
        <div class="win">
          <button aria-label="Minimize">${icon("winmin")}</button>
          <button aria-label="Restore">${icon("winmax")}</button>
          <button aria-label="Close">${icon("winx")}</button>
        </div>
      </header>
      <nav class="tabs">
        ${TABS.map((t) => html`<button class=${classMap({ on: t === this.tab })} @click=${() => (this.tab = t)}>${t}</button>`)}
        <button class="mini" aria-label="Minimize ribbon">${icon("ribmin")}${icon("down")}</button>
      </nav>
      <div class="ribbon">
        ${this.panel("Draw", html`
          ${this.big("line", "Line", "w30", true)}${this.big("poly", "Polyline", "w35", true)}${this.big("circle", "Circle", "w30", true)}${this.big("arc", "Arc", "w28", true)}
          <div class="col" style="grid-template-columns:28px 28px">
            ${["rect", "spline", "ellipse", "points", "hatch", "cloud"].map((n) => this.small(n, "", true))}
          </div>`)}
        ${this.panel("Modify", html`
          ${this.big("move", "Move", "w29")}${this.big("rotate", "Rotate", "w29")}${this.big("copy", "Copy", "w29")}${this.big("mirror", "Mirror", "w30")}
          <div class="col" style="grid-template-columns:49px 50px 16px">
            ${this.small("stretch", "Stretch")}${this.small("trim", "Trim", true)}${this.small("align")}
            ${this.small("scale", "Scale")}${this.small("fillet", "Fillet", true)}${this.small("erase")}
            ${this.small("offset", "Offset")}${this.small("array", "Array", true)}${this.small("explode")}
          </div>`)}
        ${this.panel("Annotation", html`
          <button class="big mt">${icon("mtext")}<span class="lab"><span>Multiline<br />Text</span>${icon("down")}</span></button>
          ${this.big("table", "Table", "w30")}
          <div class="col" style="grid-template-columns:38px">
            ${this.small("dim", "", true)}${this.small("leader", "", true)}${this.small("field", "Field")}
          </div>`)}
        ${this.panel("Layers", html`
          ${this.big("layerprops", html`Layer<br />Properties`, "w40")}
          <div class="tools">
            <div class="lgrid">${Array.from({ length: 12 }, (_, i) => html`<button aria-label="Layer tool ${i + 1}">${icon("l" + i)}</button>`)}</div>
            <div class="combo lcombo">${icon("bulb")}${icon("sun")}${icon("unlock")}<span class="sq"></span>
              <select aria-label="Layer"><option>0</option></select>${icon("down")}</div>
          </div>`)}
        ${this.panel("Block", html`
          ${this.big("insert", "Insert", "w28")}${this.big("base", html`Change<br />Base Point`, "w40")}
          <div class="col off">${this.small("blk0")}${this.small("blk1")}${this.small("blk2")}</div>`, false)}
        ${this.panel("Properties", html`
          <div class="col" style="padding-left:1px">${this.small("palette")}${this.small("lw")}${this.small("lt")}</div>
          <div class="col" style="flex:1;padding:0 2px 0 1px">
            <div class="combo"><span class="sq l"></span><select aria-label="Color"><option>ByLayer</option></select>${icon("down")}</div>
            <div class="combo r"><span class="rule"></span><select aria-label="Lineweight"><option>ByLayer</option></select>${icon("down")}</div>
            <div class="combo r"><span class="rule"></span><select aria-label="Linetype"><option>ByLayer</option></select>${icon("down")}</div>
          </div>`, true, true)}
        ${this.panel("Clipboard", html`
          ${this.big("paste", "Paste", "w29", true)}${this.big("cps", html`Copy and Paste<br />Settings`, "w58")}
          <div class="col off">${this.small("cut")}${this.small("copyS")}${this.small("brush")}</div>`, false)}
      </div>
      <div class="docs">
        <button aria-label="Menu">${icon("menu")}</button>
        <div class="doc"><button>Drawing1</button><button aria-label="Close drawing">${icon("close")}</button></div>
        <button aria-label="New drawing">${icon("plus")}</button><span class="sl">${icon("slash")}</span>
      </div>
      <main class="main">
        <div class="left">
          <div class="view">
            ${this.gridLines()}
            <div class="vlabel">[–] [Top] [2D Wireframe] [WCS]</div>
            <div class="vwin">
              <button aria-label="Minimize view">${icon("vmin")}</button>
              <button aria-label="Restore view">${icon("vmax")}</button>
              <button aria-label="Close view">${icon("vx")}</button>
            </div>
            <svg class="cross" width="52" height="52" viewBox="0 0 52 52" aria-hidden="true">
              <path d="M26 0v23M26 29v23M0 26h23M29 26h23" stroke="#80858b"/><path d="M23.500 23.500h5v5h-5z" fill="none" stroke="#b0b4b8"/>
            </svg>
            <svg class="ucs" width="56" height="54" viewBox="0 0 56 54" aria-hidden="true">
              <g fill="none" stroke="#b5bbc2"><path d="M6 43h5v5H6zM8.500 43V15M6.500 21l2-6 2 6M11 45.500h28M33 43.500l6 2-6 2"/></g>
              <text x="6" y="11">Y</text><text x="44" y="49">X</text>
            </svg>
          </div>
          <div class="lays">
            <button aria-label="Layout menu">${icon("menuS")}</button>
            <button class="model">Model</button>
            <button>Layout1</button>${icon("slashS")}
            <button>Layout2</button>
            <span class="tail">${icon("slashS")}<button aria-label="New layout">${icon("plusS")}</button>${icon("slashS")}</span>
          </div>
          <div class="cmd">
            <button class="grip" aria-label="Close command line">${icon("closeD")}</button>
            <div class="log">
              <div class="hist">${Array.from({ length: 6 }, () => html`<div>Command:</div>`)}</div>
              <div class="entry"><label for="cmdline">Command:</label><input id="cmdline" type="text" /></div>
            </div>
          </div>
        </div>
        <cad-properties></cad-properties>
      </main>
      <footer class="status">
        <span class="coord">617.8204, 344.8957, 0.0000</span>
        <div class="snaps">
          ${STATUS.map(([n, label, on]) => html`<button class=${classMap({ on })} aria-label=${label}>${icon(n)}</button>`)}
        </div>
        <div class="right">
          ${icon("mm")}<select class="unit" aria-label="Units"><option>Millimeters</option></select>${icon("downL")}
          <span class="sep">${icon("ann")}</span><select class="ratio" aria-label="Scale"><option>1:1</option></select>${icon("downL")}
          <div class="extras">
            ${["ann2", "ann3", "iso", "gear", "globe", "full", "menuB"].map((n) => html`<button aria-label=${n}>${icon(n)}</button>`)}
          </div>
        </div>
      </footer>
    `;
  }
}
